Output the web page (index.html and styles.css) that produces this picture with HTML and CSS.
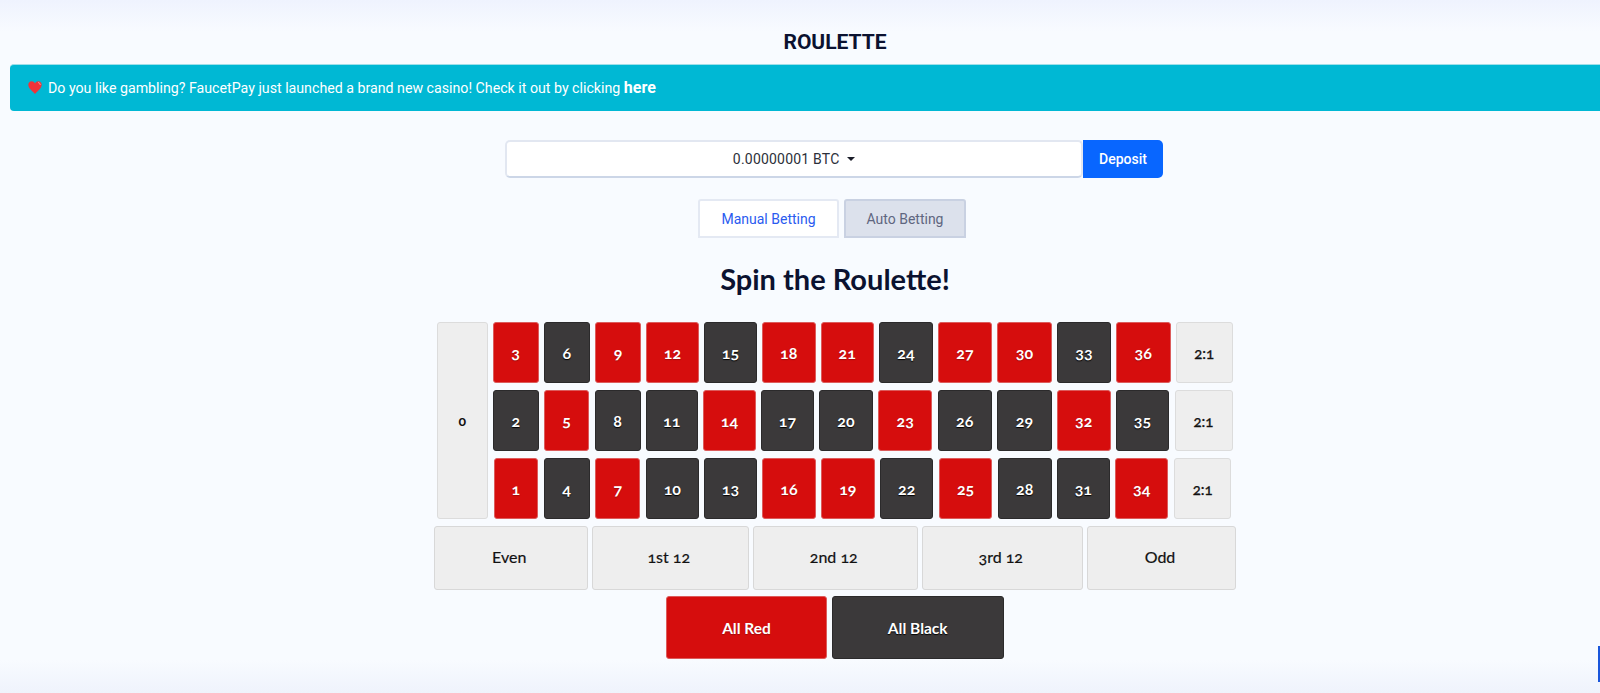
FILE: index.html
```html
<!DOCTYPE html>
<html lang="en">
<head>
    <meta charset="UTF-8">
    <meta name="viewport" content="width=device-width, initial-scale=1.0">
    <title>Roulette</title>
    <link rel="stylesheet" href="styles.css">
</head>
<body>
    <div class="page">
        <h3 class="page-title">ROULETTE</h3>
        <div class="alert">
            <svg class="heart" viewBox="0 0 14 13" width="14" height="13" aria-hidden="true">
                <path d="M7 13 C5 10.5 0.3 7.5 0.3 3.8 C0.3 1.6 1.9 0.2 3.6 0.2 C5.1 0.2 6.3 1 7 2.4 C7.7 1 8.9 0.2 10.4 0.2 C12.1 0.2 13.7 1.6 13.7 3.8 C13.7 7.5 9 10.5 7 13 Z" fill="#f0333a"/>
                <path d="M10 1.6 C11.4 1.6 12.3 2.7 12.2 4" fill="none" stroke="#ff9a9a" stroke-width="1"/>
            </svg>
            <span>Do you like gambling? FaucetPay just launched a brand new casino! Check it out by clicking <a href="#">here</a></span>
        </div>

        <div class="bet-bar">
            <button class="currency" type="button">0.00000001 BTC <span class="caret"></span></button>
            <button class="deposit" type="button">Deposit</button>
        </div>

        <div class="tabs">
            <a class="tab active" href="#">Manual Betting</a>
            <a class="tab" href="#">Auto Betting</a>
        </div>

        <h2 class="spin-title">Spin the Roulette!</h2>

        <div class="board">
            <div class="numbers">
                <div class="cell zero">0</div>
                <div class="rows">
                    <div class="row row-top">
                        <div class="cell red">3</div>
                        <div class="cell black">6</div>
                        <div class="cell red">9</div>
                        <div class="cell red">12</div>
                        <div class="cell black">15</div>
                        <div class="cell red">18</div>
                        <div class="cell red">21</div>
                        <div class="cell black">24</div>
                        <div class="cell red">27</div>
                        <div class="cell red">30</div>
                        <div class="cell black">33</div>
                        <div class="cell red">36</div>
                        <div class="cell payout">2:1</div>
                    </div>
                    <div class="row row-mid">
                        <div class="cell black">2</div>
                        <div class="cell red">5</div>
                        <div class="cell black">8</div>
                        <div class="cell black">11</div>
                        <div class="cell red">14</div>
                        <div class="cell black">17</div>
                        <div class="cell black">20</div>
                        <div class="cell red">23</div>
                        <div class="cell black">26</div>
                        <div class="cell black">29</div>
                        <div class="cell red">32</div>
                        <div class="cell black">35</div>
                        <div class="cell payout">2:1</div>
                    </div>
                    <div class="row row-low">
                        <div class="cell red">1</div>
                        <div class="cell black">4</div>
                        <div class="cell red">7</div>
                        <div class="cell black">10</div>
                        <div class="cell black">13</div>
                        <div class="cell red">16</div>
                        <div class="cell red">19</div>
                        <div class="cell black">22</div>
                        <div class="cell red">25</div>
                        <div class="cell black">28</div>
                        <div class="cell black">31</div>
                        <div class="cell red">34</div>
                        <div class="cell payout">2:1</div>
                    </div>
                </div>
            </div>

            <div class="outside">
                <div class="cell wide">Even</div>
                <div class="cell wide">1st 12</div>
                <div class="cell wide">2nd 12</div>
                <div class="cell wide">3rd 12</div>
                <div class="cell wide">Odd</div>
            </div>

            <div class="colors">
                <div class="cell red all">All Red</div>
                <div class="cell black all">All Black</div>
            </div>
        </div>
    </div>

    <div class="side-tab"></div>
</body>
</html>
```

FILE: styles.css
```css
html, body {
    height: 100%;
}
body {
    margin: 0;
    overflow: hidden;
    font-family: Roboto, sans-serif;
    color: #0b1230;
    background: linear-gradient(to bottom, #eff3fe 0, #f8fbff 32px, #f8fbff 660px, #eff3fc 693px);
}
.page {
    width: 1650px;
    margin-left: 10px;
    padding-top: 30px;
}
.page-title {
    margin: 0;
    height: 34px;
    line-height: 24px;
    font-size: 21px;
    font-weight: 700;
    text-align: center;
    color: #0b1230;
}
.alert {
    display: flex;
    align-items: center;
    height: 47px;
    padding-left: 18px;
    padding-bottom: 2px;
    box-sizing: border-box;
    background-color: #00b8d4;
    border-top: 1px solid #9fdfe9;
    border-radius: 4px;
    color: #fff;
    font-size: 14.2px;
}
.heart {
    margin-right: 6px;
}
.alert a {
    color: #fff;
    font-weight: 700;
    font-size: 16px;
    text-decoration: none;
}

.bet-bar {
    display: flex;
    justify-content: center;
    margin-top: 29px;
    padding-right: 2px;
}
.currency {
    width: 578px;
    height: 38px;
    padding: 0;
    background-color: #fff;
    border: 2px solid #e2e7f1;
    border-bottom-color: #ccd6e7;
    border-radius: 5px;
    font-family: Roboto, sans-serif;
    font-size: 14px;
    letter-spacing: .2px;
    color: #2c2f3a;
}
.caret {
    display: inline-block;
    margin-left: 4px;
    vertical-align: 3px;
    border-top: 4px solid #1a1d29;
    border-left: 4px solid transparent;
    border-right: 4px solid transparent;
}
.deposit {
    width: 80px;
    height: 38px;
    padding: 0;
    background-color: #0866ff;
    border: none;
    border-radius: 0 5px 5px 0;
    font-family: Roboto, sans-serif;
    font-size: 14px;
    font-weight: 500;
    color: #fff;
}

.tabs {
    display: flex;
    justify-content: center;
    gap: 5px;
    margin-top: 21px;
    padding-right: 6px;
}
.tab {
    display: flex;
    align-items: center;
    justify-content: center;
    height: 39px;
    width: 122px;
    box-sizing: border-box;
    background-color: #dce1ec;
    border: 2px solid #c9d1e2;
    border-radius: 3px 3px 0 0;
    font-size: 14px;
    color: #5f6680;
    text-decoration: none;
}
.tab.active {
    width: 141px;
    background-color: #fff;
    border-color: #e4e9f3;
    color: #2a5bf0;
}

.spin-title {
    margin: 20px 0 0;
    height: 42px;
    line-height: 42px;
    font-family: Lato, sans-serif;
    font-size: 29px;
    font-weight: 700;
    text-align: center;
    color: #0b1230;
}

.board {
    display: flex;
    flex-direction: column;
    align-items: center;
    margin-top: 22px;
}
.numbers {
    display: flex;
    gap: 5px;
}
.rows {
    display: flex;
    flex-direction: column;
    gap: 7px;
}
.row {
    display: grid;
    height: 61px;
    column-gap: 5px;
}
.row-top {
    grid-template-columns: 46px 46.5px 46px 53px 53px 53.5px 53.5px 54px 54px 55px 54px 54.5px 57.5px;
}
.row-mid {
    grid-template-columns: 45.5px 45.5px 46px 52px 53px 52.5px 54px 54px 54.5px 54.5px 53.5px 53.5px 58px;
    column-gap: 5.25px;
    padding-left: .5px;
}
.row-low {
    grid-template-columns: 44.5px 46px 45.5px 53px 52.5px 53.5px 53.5px 53.5px 53.5px 54px 52.5px 53.5px 57.5px;
    column-gap: 5.4px;
    padding-left: 1.2px;
}
.cell {
    display: flex;
    align-items: center;
    justify-content: center;
    box-sizing: border-box;
    border: 1px solid #dcdcdc;
    border-radius: 3px;
    background-color: #eee;
    font-family: Lato, sans-serif;
    font-variant-numeric: oldstyle-nums;
    font-weight: 700;
    font-size: 16px;
    color: #111;
}
.cell.red {
    background-color: #d60d0d;
    border-color: #dc5c5c;
    color: #fff;
    text-shadow: 0 1px 1px rgba(0,0,0,.25);
}
.cell.black {
    background-color: #3b393a;
    border-color: #2b2a2b;
    color: #fff;
    text-shadow: 0 1px 1px #000;
}
.zero {
    width: 50.5px;
    height: 197px;
    font-size: 14px;
}
.payout {
    font-size: 15px;
    font-weight: 400;
    -webkit-text-stroke: .3px #111;
}

.outside {
    display: grid;
    grid-template-columns: 153.5px 157.5px 164.5px 161.5px 149px;
    column-gap: 4px;
    margin-top: 7px;
    height: 64px;
}
.wide {
    padding-right: 3px;
    padding-bottom: 3px;
    font-size: 16px;
    font-weight: 400;
    border-color: #d8d8d8;
    color: #111;
    -webkit-text-stroke: .2px #111;
}
.colors {
    display: flex;
    gap: 5px;
    margin-top: 6px;
    height: 63px;
}
.all {
    font-size: 15.5px;
}
.all.red {
    width: 160.5px;
}
.all.black {
    width: 172px;
}

.side-tab {
    position: fixed;
    right: 0;
    top: 646px;
    width: 2px;
    height: 36px;
    background-color: #1a56db;
}
```
